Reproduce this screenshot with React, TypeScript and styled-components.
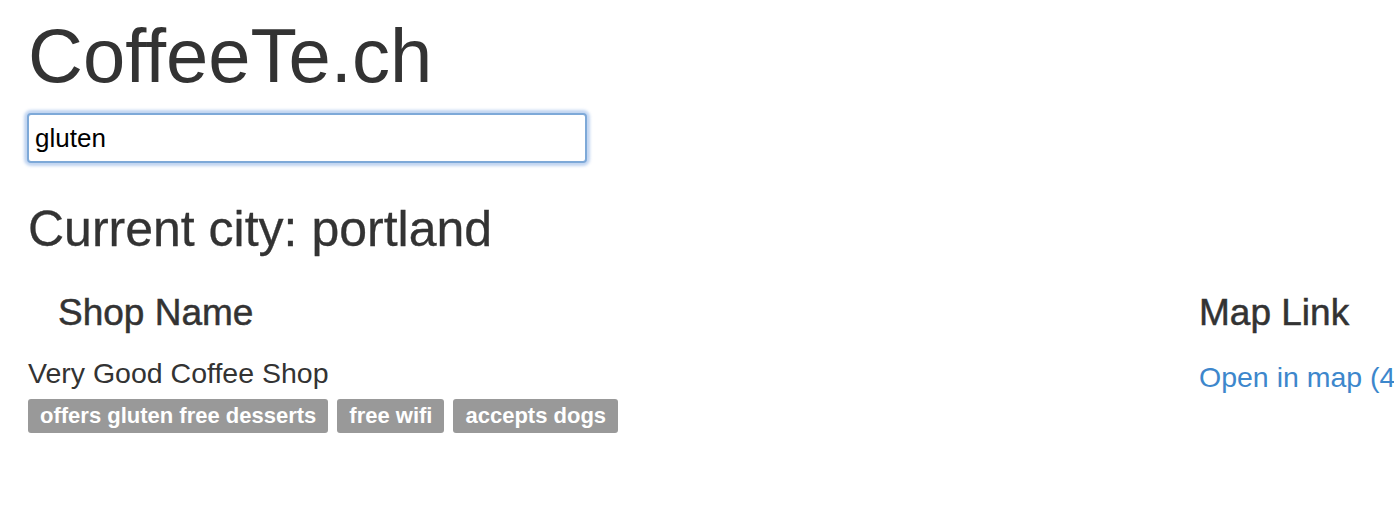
import React from "react";
import styled, { createGlobalStyle } from "styled-components";

const Global = createGlobalStyle`
  html, body {
    margin: 0;
    padding: 0;
    background: #fff;
    overflow: hidden;
  }
  body {
    font-family: "Liberation Sans", Arial, sans-serif;
    color: #333;
  }
`;

const Page = styled.div`
  padding: 14px 0 0 28px;
  width: 1500px;
`;

const Title = styled.h1`
  margin: 0;
  font-size: 76px;
  font-weight: normal;
  line-height: 84px;
`;

const Search = styled.input`
  display: block;
  margin: 15px 0 0 -1px;
  box-sizing: border-box;
  width: 560px;
  height: 50px;
  padding: 0 6px;
  font-family: "Liberation Sans", Arial, sans-serif;
  font-size: 26px;
  color: #000;
  border: 2px solid #7ea9d8;
  border-radius: 4px;
  box-shadow: 0 0 3px 3px rgba(100, 150, 220, 0.4);
  outline: none;
`;

const City = styled.h2`
  margin: 36px 0 0;
  font-size: 50px;
  font-weight: normal;
  line-height: 60px;
  -webkit-text-stroke: 0.3px #333;
`;

const Table = styled.table`
  margin-top: 34px;
  border-collapse: collapse;
  table-layout: fixed;
  width: 1400px;
`;

const ShopCol = styled.col`
  width: 1171px;
`;

const Th = styled.th<{ $indent?: number }>`
  text-align: left;
  font-size: 37px;
  font-weight: normal;
  -webkit-text-stroke: 0.5px #333;
  padding: 0 0 24px ${(p) => p.$indent ?? 0}px;
  line-height: 40px;
  white-space: nowrap;
`;

const Td = styled.td`
  vertical-align: top;
  padding: 0;
  font-size: 28.5px;
  line-height: 32px;
  overflow: visible;
`;

const Labels = styled.div`
  display: flex;
  gap: 9px;
  margin-top: 10px;
`;

const Label = styled.span`
  display: inline-block;
  background: #999;
  color: #fff;
  font-weight: bold;
  font-size: 22px;
  line-height: 34px;
  padding: 0 12px;
  border-radius: 3px;
`;

const MapLink = styled.a`
  color: #3d87cc;
  text-decoration: none;
  display: inline-block;
  margin-top: 4px;
  white-space: nowrap;
`;

export default function App() {
  return (
    <>
      <Global />
      <Page>
        <Title>CoffeeTe.ch</Title>
        <Search defaultValue="gluten" />
        <City>Current city: portland</City>
        <Table>
          <colgroup>
            <ShopCol />
            <col />
          </colgroup>
          <thead>
            <tr>
              <Th $indent={30}>Shop Name</Th>
              <Th>Map Link</Th>
            </tr>
          </thead>
          <tbody>
            <tr>
              <Td>
                Very Good Coffee Shop
                <Labels>
                  <Label>offers gluten free desserts</Label>
                  <Label>free wifi</Label>
                  <Label>accepts dogs</Label>
                </Labels>
              </Td>
              <Td>
                <MapLink href="#">Open in map (4 min)</MapLink>
              </Td>
            </tr>
          </tbody>
        </Table>
      </Page>
    </>
  );
}
